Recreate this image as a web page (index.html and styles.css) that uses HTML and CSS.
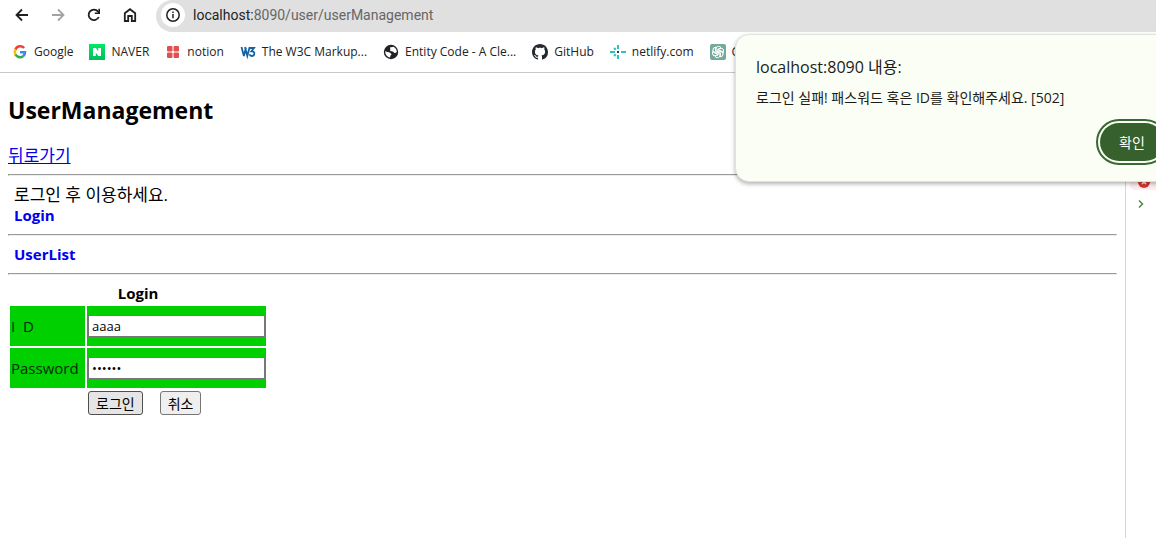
FILE: index.html
```html
<!DOCTYPE html>
<html lang="ko">
<head>
  <meta charset="UTF-8" />
  <meta name="viewport" content="width=device-width, initial-scale=1.0"/>
  <title>UserManagement</title>
  <link rel="stylesheet" href="styles.css">
</head>
<body>
  <header>
    <div class="toolbar">
      <button type="button" class="nav" aria-label="Back">
        <svg width="16" height="16" viewBox="0 0 16 16"><path d="M14 8H3M8 2.500L2.500 8L8 13.500" fill="none" stroke="#1f2020" stroke-width="1.800"/></svg>
      </button>
      <button type="button" class="nav" aria-label="Forward">
        <svg width="16" height="16" viewBox="0 0 16 16"><path d="M2 8H13M8 2.500L13.500 8L8 13.500" fill="none" stroke="#a3a3a3" stroke-width="1.800"/></svg>
      </button>
      <button type="button" class="nav" aria-label="Reload">
        <svg width="16" height="16" viewBox="0 0 16 16"><path d="M12.800 10A5.300 5.300 0 1 1 12 4.400L13.500 6" fill="none" stroke="#1f2020" stroke-width="1.800"/><path d="M14 1.800V7H8.800V5.400H12.400V1.800Z" fill="#1f2020"/></svg>
      </button>
      <button type="button" class="nav" aria-label="Home">
        <svg width="16" height="16" viewBox="0 0 16 16"><path d="M2.800 14V6.300L8 2.200L13.200 6.300V14H9.800V9H6.200V14Z" fill="none" stroke="#1f2020" stroke-width="1.800"/></svg>
      </button>
      <div class="address">
        <span class="info">
          <svg width="16" height="16" viewBox="0 0 16 16"><circle cx="8" cy="8" r="6.200" fill="none" stroke="#1f2020" stroke-width="1.500"/><path d="M8 7V11.300M8 4.600V6" stroke="#1f2020" stroke-width="1.500"/></svg>
        </span>
        <span class="url"><b>localhost:</b>8090/user/userManagement</span>
      </div>
    </div>

    <nav class="bookmarks">
      <a href="#" class="google">
        <svg width="16" height="16" viewBox="0 0 16 16" fill="none" stroke-width="2.600"><path d="M12.100 4A5.100 5.100 0 0 0 3.500 5.500" stroke="#ea4335"/><path d="M3.500 5.500A5 5 0 0 0 3.500 10.500" stroke="#fbbc05"/><path d="M3.500 10.500A5.100 5.100 0 0 0 11.300 12" stroke="#34a853"/><path d="M11.300 12A5 5 0 0 0 13 8.200H8" stroke="#4285f4"/></svg>
        Google</a>
      <a href="#" class="naver">
        <svg width="16" height="16" viewBox="0 0 16 16"><defs><linearGradient id="n" x2="0" y2="1"><stop stop-color="#00ea62"/><stop offset="1" stop-color="#00bd62"/></linearGradient></defs><rect width="16" height="16" fill="url(#n)"/><path d="M4 4H7L9.200 7.500V4H12V12H9.200L6.800 8.500V12H4Z" fill="#fff"/></svg>
        NAVER</a>
      <a href="#" class="notion">
        <svg width="16" height="16" viewBox="0 0 16 16" fill="#e2504d"><rect x="2" y="2" width="5.500" height="5.500" rx="1"/><rect x="8.500" y="2" width="5.500" height="5.500" rx="1"/><rect x="2" y="8.500" width="5.500" height="5.500" rx="1"/><rect x="8.500" y="8.500" width="5.500" height="5.500" rx="1"/></svg>
        notion</a>
      <a href="#" class="w3c">
        <svg width="16" height="16" viewBox="0 0 16 16" fill="none" stroke="#1463a4" stroke-width="1.800"><path d="M1.500 3L3.900 12L6 3.500M5 3L7.300 12L9.700 3"/><path d="M9.500 4H14L11.500 7.300C15.500 7 15 12 11.800 12Q10 12 9.500 10.300"/></svg>
        The W3C Markup...</a>
      <a href="#" class="entity">
        <svg width="16" height="16" viewBox="0 0 16 16"><circle cx="8" cy="8" r="7.200" fill="#202124"/><path d="M2.300 7C4 8.500 6.500 7.500 7.500 9.300C9 10 8.500 11 7.500 11.500L7 13.500C4 12.800 2 10.500 2.300 7ZM6.800 3.500L10.500 2.800C12.500 3.800 14 6 13.800 8C12 9.800 11 9 10 7.500C8 7.500 6 6.500 7.500 5.500Z" fill="#fff"/></svg>
        Entity Code - A Cle...</a>
      <a href="#" class="github">
        <svg width="16" height="16" viewBox="0 0 16 16"><path fill="#24292f" d="M8 0C3.580 0 0 3.580 0 8c0 3.540 2.290 6.530 5.470 7.590.4.070.55-.17.55-.38 0-.19-.01-.82-.01-1.490-2.010.37-2.530-.49-2.690-.94-.09-.23-.48-.94-.82-1.130-.28-.15-.68-.52-.01-.53.63-.01 1.080.58 1.230.82.72 1.210 1.870.87 2.330.66.07-.52.28-.87.51-1.070-1.780-.2-3.640-.89-3.640-3.950 0-.87.31-1.590.82-2.150-.08-.2-.36-1.020.08-2.120 0 0 .67-.21 2.200.82.64-.18 1.320-.27 2-.27s1.360.09 2 .27c1.530-1.040 2.200-.82 2.200-.82.44 1.100.16 1.920.08 2.120.51.56.82 1.270.82 2.150 0 3.070-1.870 3.750-3.650 3.950.29.25.54.73.54 1.480 0 1.070-.01 1.930-.01 2.200 0 .21.15.46.55.38A8.010 8.010 0 0 0 16 8c0-4.420-3.580-8-8-8Z"/></svg>
        GitHub</a>
      <a href="#" class="netlify">
        <svg width="16" height="16" viewBox="0 0 16 16" fill="none" stroke="#31bfc1" stroke-width="2"><path d="M8 1V5M8 11V15M0 8H5M11 8H16M4 4L5.800 5.800M4 12L5.800 10.200"/><path d="M7 8H9" stroke="#153e50"/></svg>
        netlify.com</a>
      <a href="#" class="chatgpt">
        <svg width="16" height="16" viewBox="0 0 16 16"><rect width="16" height="16" rx="2" fill="#74aa9c"/><g fill="none" stroke="#fff" stroke-width="1"><path id="p" d="M6 8V5Q6 2.300 8.500 2.300Q10 2.300 11 3.500L8 5.300V8"/><use href="#p" transform="rotate(60 8 8)"/><use href="#p" transform="rotate(120 8 8)"/><use href="#p" transform="rotate(180 8 8)"/><use href="#p" transform="rotate(240 8 8)"/><use href="#p" transform="rotate(300 8 8)"/></g></svg>
        GPT</a>
    </nav>
  </header>

  <div class="content">
    <main>
      <h2>UserManagement</h2>
      <a href="#" class="back">뒤로가기</a>
      <hr>
      <div class="menu">
        <div class="notice">로그인 후 이용하세요.</div>
        <a href="#">Login</a>
      </div>
      <hr>
      <div class="menu"><a href="#">UserList</a></div>
      <hr>
      <form>
        <table>
          <caption>Login</caption>
          <tr class="field">
            <td><label for="id">I&nbsp; D</label></td>
            <td><input type="text" id="id" name="id" value="aaaa"></td>
          </tr>
          <tr class="field">
            <td><label for="password">Password</label></td>
            <td><input type="password" id="password" name="password" value="aaaaaa"></td>
          </tr>
          <tr>
            <td></td>
            <td class="buttons"><button type="submit" class="login">로그인</button><button type="reset">취소</button></td>
          </tr>
        </table>
      </form>
    </main>

    <aside>
      <div class="error">
        <svg width="12" height="12" viewBox="0 0 12 12"><circle cx="6" cy="6" r="6" fill="#dc362e"/><path d="M4 4L8 8M8 4L4 8" stroke="#fff" stroke-width="1.500"/></svg>
      </div>
      <svg class="prompt" width="12" height="12" viewBox="0 0 12 12"><path d="M4 2.500L7.500 6L4 9.500" fill="none" stroke="#4f8747" stroke-width="1.500"/></svg>
    </aside>
  </div>

  <div class="alert" role="alertdialog" aria-labelledby="alertTitle">
    <div class="title" id="alertTitle">localhost:8090 내용:</div>
    <p>로그인 실패! 패스워드 혹은 ID를 확인해주세요. [502]</p>
    <button type="button">확인</button>
  </div>
</body>
</html>
```
FILE: styles.css
```css
* { box-sizing: border-box; }
body { margin: 0; min-height: 100vh; display: flex; flex-direction: column; position: relative; overflow: hidden; font: 16px/21px "Open Sans", "Noto Sans CJK KR", sans-serif; color: #000; background: #fff; }

/* browser bars */
.toolbar { display: flex; height: 32px; padding-left: 4px; }
.nav { width: 36px; height: 30px; padding: 0; border: 0; background: none; display: flex; align-items: center; justify-content: center; }
.address { flex: 1; display: flex; align-items: center; gap: 8px; margin-left: 8px; padding: 0 0 2px 5px; background: #e0e0e0; border-radius: 16px 0 0 16px; }
.info { width: 24px; height: 24px; border-radius: 50%; background: #fff; display: flex; align-items: center; justify-content: center; }
.url { font-family: Roboto, sans-serif; font-size: 14px; color: #666; }
.url b { font-weight: normal; color: #222; }
.bookmarks { display: flex; height: 41px; padding-left: 12px; gap: 16px; border-bottom: 1px solid #c8c8c8; white-space: nowrap; }
.bookmarks a { display: flex; align-items: center; gap: 6px; height: 39px; font-size: 12px; color: #222; text-decoration: none; flex-shrink: 0; }

/* page */
.content { flex: 1; display: flex; }
main { flex: 1; padding: 23px 8px; }
h2 { margin: 0 0 20px; font-size: 23px; line-height: 29px; }
hr { margin: 8px 0; }
a { color: #0000ee; }
.back, .notice { font-size: 17px; }
.back { display: block; }
.menu { padding-left: 6px; }
.menu a { font-size: 15px; font-weight: bold; text-decoration: none; }

table { border-spacing: 2px; }
caption { font-size: 15px; font-weight: bold; }
td { padding: 1px; }
.field td { height: 40px; background: #00d000; color: #052b05; }
.field td:first-child { width: 75px; font-size: 15px; }
.field input { display: block; width: 177px; height: 22px; padding: 1px 3px; border: 1px solid #767676; font: 13px "Open Sans", sans-serif; }
.buttons button { height: 24px; padding: 0 7px; border: 1px solid #767676; border-radius: 3px; background: #efefef; font: 14px/20px "Noto Sans CJK KR", sans-serif; color: #000; }
.buttons .login { margin-right: 17px; border-color: #4f4f4f; background: #e5e5e5; }

/* devtools edge */
aside { width: 31px; padding: 101px 0 0 4px; border-left: 1px solid #c3e7b4; }
.error { height: 16px; padding: 2px 0 0 8px; background: #fceeee; border-radius: 5px 0 0 5px; }
.error svg { display: block; }
.prompt { display: block; margin: 8px 0 0 5px; }

.alert { position: absolute; top: 34px; left: 735px; width: 448px; height: 148px; padding: 22px 18px 16px 20px; border: 1px solid #dfe3d8; border-radius: 14px; background: #fafef4; box-shadow: 0 2px 4px #0000004d; color: #1a1c18; }
.title { font-size: 16px; }
.alert p { margin: 9px 0 15px; font-size: 14px; }
.alert button { display: block; margin-left: auto; width: 64px; height: 38px; border: 0; border-radius: 19px; outline: 2px solid #386a2f; outline-offset: 2px; background: #36602c; color: #fff; font: 14px "Noto Sans CJK KR", sans-serif; }
```
